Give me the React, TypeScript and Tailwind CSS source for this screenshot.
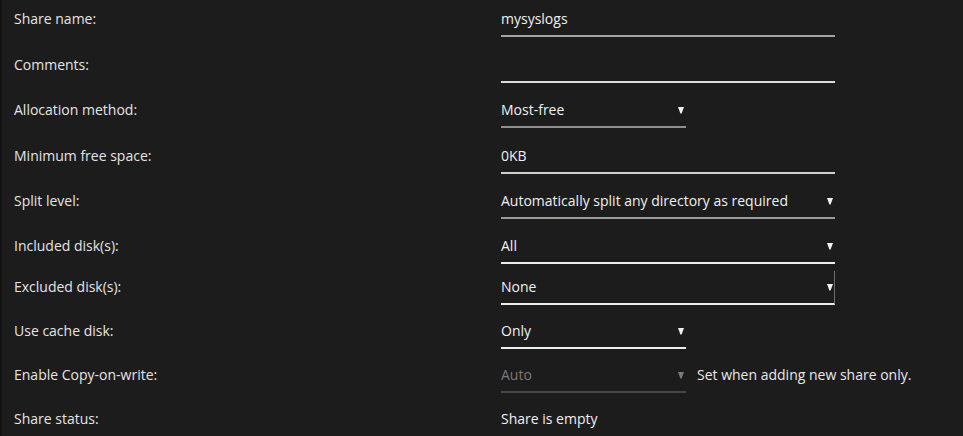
import React from 'react'

type Row = {
    label: string
    h: number
    kind: 'input' | 'select' | 'text'
    value?: string
    wide?: boolean
    line?: string
    disabled?: boolean
    edge?: boolean
    note?: string
}

const rows: Row[] = [
    { label: 'Share name:', h: 46, kind: 'input', value: 'mysyslogs', wide: true, line: 'border-[#a3a3a3]' },
    { label: 'Comments:', h: 45, kind: 'input', value: '', wide: true, line: 'border-[#dcdcdc]' },
    { label: 'Allocation method:', h: 46, kind: 'select', value: 'Most-free', line: 'border-[#8e8e8e]' },
    { label: 'Minimum free space:', h: 45, kind: 'input', value: '0KB', wide: true, line: 'border-[#cfcfcf]' },
    { label: 'Split level:', h: 45, kind: 'select', value: 'Automatically split any directory as required', wide: true, line: 'border-[#9a9a9a]' },
    { label: 'Included disk(s):', h: 41, kind: 'select', value: 'All', wide: true, line: 'border-[#ececec]' },
    { label: 'Excluded disk(s):', h: 44, kind: 'select', value: 'None', wide: true, line: 'border-[#ececec]', edge: true },
    { label: 'Use cache disk:', h: 44, kind: 'select', value: 'Only', line: 'border-[#ececec]' },
    { label: 'Enable Copy-on-write:', h: 44, kind: 'select', value: 'Auto', line: 'border-[#474747]', disabled: true, note: 'Set when adding new share only.' },
    { label: 'Share status:', h: 32, kind: 'text', value: 'Share is empty' },
]

function Caret({ dim }: { dim?: boolean }) {
    return (
        <svg width="6" height="8" viewBox="0 0 6 8" className={dim ? 'text-[#7a7a7a]' : 'text-[#f0f0f0]'}>
            <path d="M0 1 H6 L3.6 7.5 H2.4 Z" fill="currentColor" />
        </svg>
    )
}

function Control({ row }: { row: Row }) {
    if (row.kind === 'text') {
        return <div className="pt-[4px] leading-[20px] text-[#f0f0f0]">{row.value}</div>
    }
    const width = row.wide ? 'w-[334px]' : 'w-[185px]'
    return (
        <div className="flex items-start">
            <div
                className={`${width} pt-[4px] pb-[6px] border-b-2 ${row.line} flex items-center justify-between ${
                    row.edge ? 'border-r border-r-[#6e6e6e] -mt-[2px] pt-[6px]' : ''
                }`}
            >
                <span className={`leading-[20px] min-h-[20px] ${row.disabled ? 'text-[#7a7a7a]' : 'text-[#f0f0f0]'}`}>{row.value}</span>
                {row.kind === 'select' && (
                    <span className={row.edge ? 'mr-[1px]' : 'mr-[2px]'}>
                        <Caret dim={row.disabled} />
                    </span>
                )}
            </div>
            {row.note && <span className="ml-[11px] pt-[4px] text-[#e8e8e8] leading-[20px]">{row.note}</span>}
        </div>
    )
}

export default function App() {
    return (
        <div
            className="w-[963px] h-[436px] overflow-hidden bg-[#1c1c1c] border-l-2 border-[#121212] text-[14px] pt-[5px]"
            style={{ fontFamily: '"Open Sans", "Noto Sans", sans-serif' }}
        >
            {rows.map((row) => (
                <div key={row.label} className="flex items-start" style={{ height: row.h }}>
                    <div className="w-[499px] pl-[12px] pt-[4px] leading-[20px] text-[#e4e4e4]">{row.label}</div>
                    <Control row={row} />
                </div>
            ))}
        </div>
    )
}
